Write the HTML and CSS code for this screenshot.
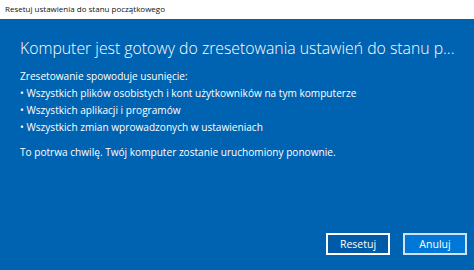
FILE: index.html
```html
<!DOCTYPE html>
<html lang="pl">
<head>
  <meta charset="utf-8">
  <title>Resetuj ustawienia do stanu początkowego</title>
  <link rel="stylesheet" href="styles.css">
</head>
<body>
  <div class="window">
    <div class="titlebar">Resetuj ustawienia do stanu początkowego</div>

    <div class="content">
      <h1 class="heading">Komputer jest gotowy do zresetowania ustawień do stanu p...</h1>

      <p class="lead">Zresetowanie spowoduje usunięcie:</p>
      <ul class="list">
        <li>Wszystkich plików osobistych i kont użytkowników na tym komputerze</li>
        <li>Wszystkich aplikacji i programów</li>
        <li>Wszystkich zmian wprowadzonych w ustawieniach</li>
      </ul>
      <p class="note">To potrwa chwilę. Twój komputer zostanie uruchomiony ponownie.</p>

      <div class="button-row">
        <button class="button button-reset">Resetuj</button>
        <button class="button button-cancel">Anuluj</button>
      </div>
    </div>
  </div>
</body>
</html>
```

FILE: styles.css
```css
/* okno dialogowe resetu */
body {
  margin: 0;
  font-family: "Open Sans", "Noto Sans", sans-serif;
  background-color: #0063b1;
}

.window {
  display: flex;
  flex-direction: column;
  width: 474px;
  height: 270px;
}

.titlebar {
  height: 19px;
  padding-left: 5px;
  background-color: #ffffff;
  color: #111;
  font-size: 8px;
  line-height: 17px;
}

.content {
  flex: 1;
  display: flex;
  flex-direction: column;
  padding: 17px 7px 15px 20px;
  color: #ffffff;
  background-color: #0063b1;
}

.heading {
  margin: 0 0 8px;
  font-size: 15.8px;
  font-weight: 300;
  line-height: 24px;
  white-space: nowrap;
}

.lead,
.note {
  margin: 0;
  font-size: 10.1px;
  line-height: 17px;
}

.list {
  margin: 0 0 8px;
  padding: 0;
  list-style: none;
  font-size: 10.1px;
  line-height: 17px;
}

.list li::before {
  content: "• ";
}

.button-row {
  margin-top: auto;
  display: flex;
  justify-content: flex-end;
  gap: 13px;
}

.button {
  width: 64px;
  height: 22px;
  padding: 0;
  font-family: inherit;
  font-size: 10.5px;
  color: #ffffff;
  cursor: pointer;
}

.button-reset {
  background-color: #005aa7;
  border: 2px solid #ffffff;
}

.button-cancel {
  background-color: #0078d7;
  border: 2px solid #cfe3f5;
}
```
